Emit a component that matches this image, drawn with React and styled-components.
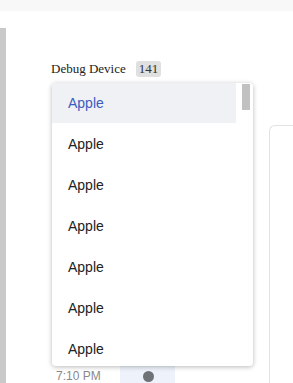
import React from "react";
import styled, { createGlobalStyle } from "styled-components";

const OPTIONS = ["Apple", "Apple", "Apple", "Apple", "Apple", "Apple", "Apple"];

const App = () => {
  return (
    <>
      <GlobalStyle />
      <Page>
        <TopBar />
        <Main>
          <SideStrip />
          <Content>
            <LabelRow>
              <Label>Debug Device</Label>
              <Badge>141</Badge>
            </LabelRow>
            <Board>
              <Timeline>
                <TimeRow>
                  <Time>7:10 PM</Time>
                  <Slot>
                    <Dot />
                  </Slot>
                </TimeRow>
              </Timeline>
              <Card />
              <Dropdown>
                <OptionList>
                  {OPTIONS.map((name, index) => (
                    <Option key={index} $active={index === 0}>
                      {name}
                    </Option>
                  ))}
                </OptionList>
                <Track>
                  <Thumb />
                </Track>
              </Dropdown>
            </Board>
          </Content>
        </Main>
      </Page>
    </>
  );
};

export default App;

const GlobalStyle = createGlobalStyle`
  html, body {
    margin: 0;
    padding: 0;
    background: #fff;
    overflow: hidden;
  }
  * {
    box-sizing: border-box;
  }
`;

const Page = styled.div`
  width: 293px;
  height: 383px;
  display: flex;
  flex-direction: column;
  overflow: hidden;
`;

const TopBar = styled.div`
  height: 11px;
  background: #f8f8f8;
  flex-shrink: 0;
`;

const Main = styled.div`
  flex: 1;
  display: flex;
  margin-top: 17px;
`;

const SideStrip = styled.div`
  width: 6px;
  background: #c9c9c9;
  flex-shrink: 0;
`;

const Content = styled.div`
  flex: 1;
  padding: 33px 0 0 45px;
  display: flex;
  flex-direction: column;
`;

const LabelRow = styled.div`
  display: flex;
  align-items: center;
  gap: 10px;
  height: 16px;
  margin-bottom: 6px;
`;

const Label = styled.span`
  font-family: "Liberation Serif", serif;
  font-size: 13px;
  color: #222;
`;

const Badge = styled.span`
  font-family: "Liberation Serif", serif;
  font-size: 13px;
  color: #333;
  background: #e0e0e0;
  border-radius: 3px;
  padding: 0 3px;
  height: 16px;
  line-height: 16px;
`;

const Board = styled.div`
  position: relative;
  flex: 1;
  display: flex;
`;

const Timeline = styled.div`
  width: 218px;
  flex-shrink: 0;
  padding-top: 283px;
`;

const TimeRow = styled.div`
  display: flex;
  height: 20px;
`;

const Time = styled.span`
  width: 69px;
  padding-left: 5px;
  font-family: "Liberation Sans", Arial, sans-serif;
  font-size: 12px;
  line-height: 20px;
  color: #8a8a8a;
`;

const Slot = styled.div`
  width: 55px;
  background: #eef3fb;
  display: flex;
  justify-content: center;
  align-items: center;
  padding-left: 1px;
`;

const Dot = styled.span`
  width: 11px;
  height: 11px;
  border-radius: 50%;
  background: #6f7378;
`;

const Card = styled.div`
  margin-top: 42px;
  flex: 1;
  border: 1px solid #e3e3e3;
  border-right: none;
  border-bottom: none;
  border-radius: 6px 0 0 0;
`;

const Dropdown = styled.div`
  position: absolute;
  top: 0;
  left: 1px;
  width: 201px;
  height: 283px;
  background: #fff;
  border-radius: 4px;
  box-shadow: 0 1px 5px rgba(0, 0, 0, 0.28);
  display: flex;
  overflow: hidden;
`;

const OptionList = styled.ul`
  list-style: none;
  margin: 0;
  padding: 0;
  flex: 1;
`;

const Option = styled.li`
  height: 40px;
  margin-bottom: 1px;
  padding-left: 16px;
  line-height: 40px;
  font-family: "Liberation Sans", Arial, sans-serif;
  font-size: 14px;
  color: ${({ $active }) => ($active ? "#3b5cc0" : "#222")};
  background: ${({ $active }) => ($active ? "#f0f1f4" : "transparent")};
  cursor: pointer;
`;

const Track = styled.div`
  width: 17px;
  padding: 1px 3px 0 6px;
`;

const Thumb = styled.div`
  height: 26px;
  background: #c1c1c1;
`;
